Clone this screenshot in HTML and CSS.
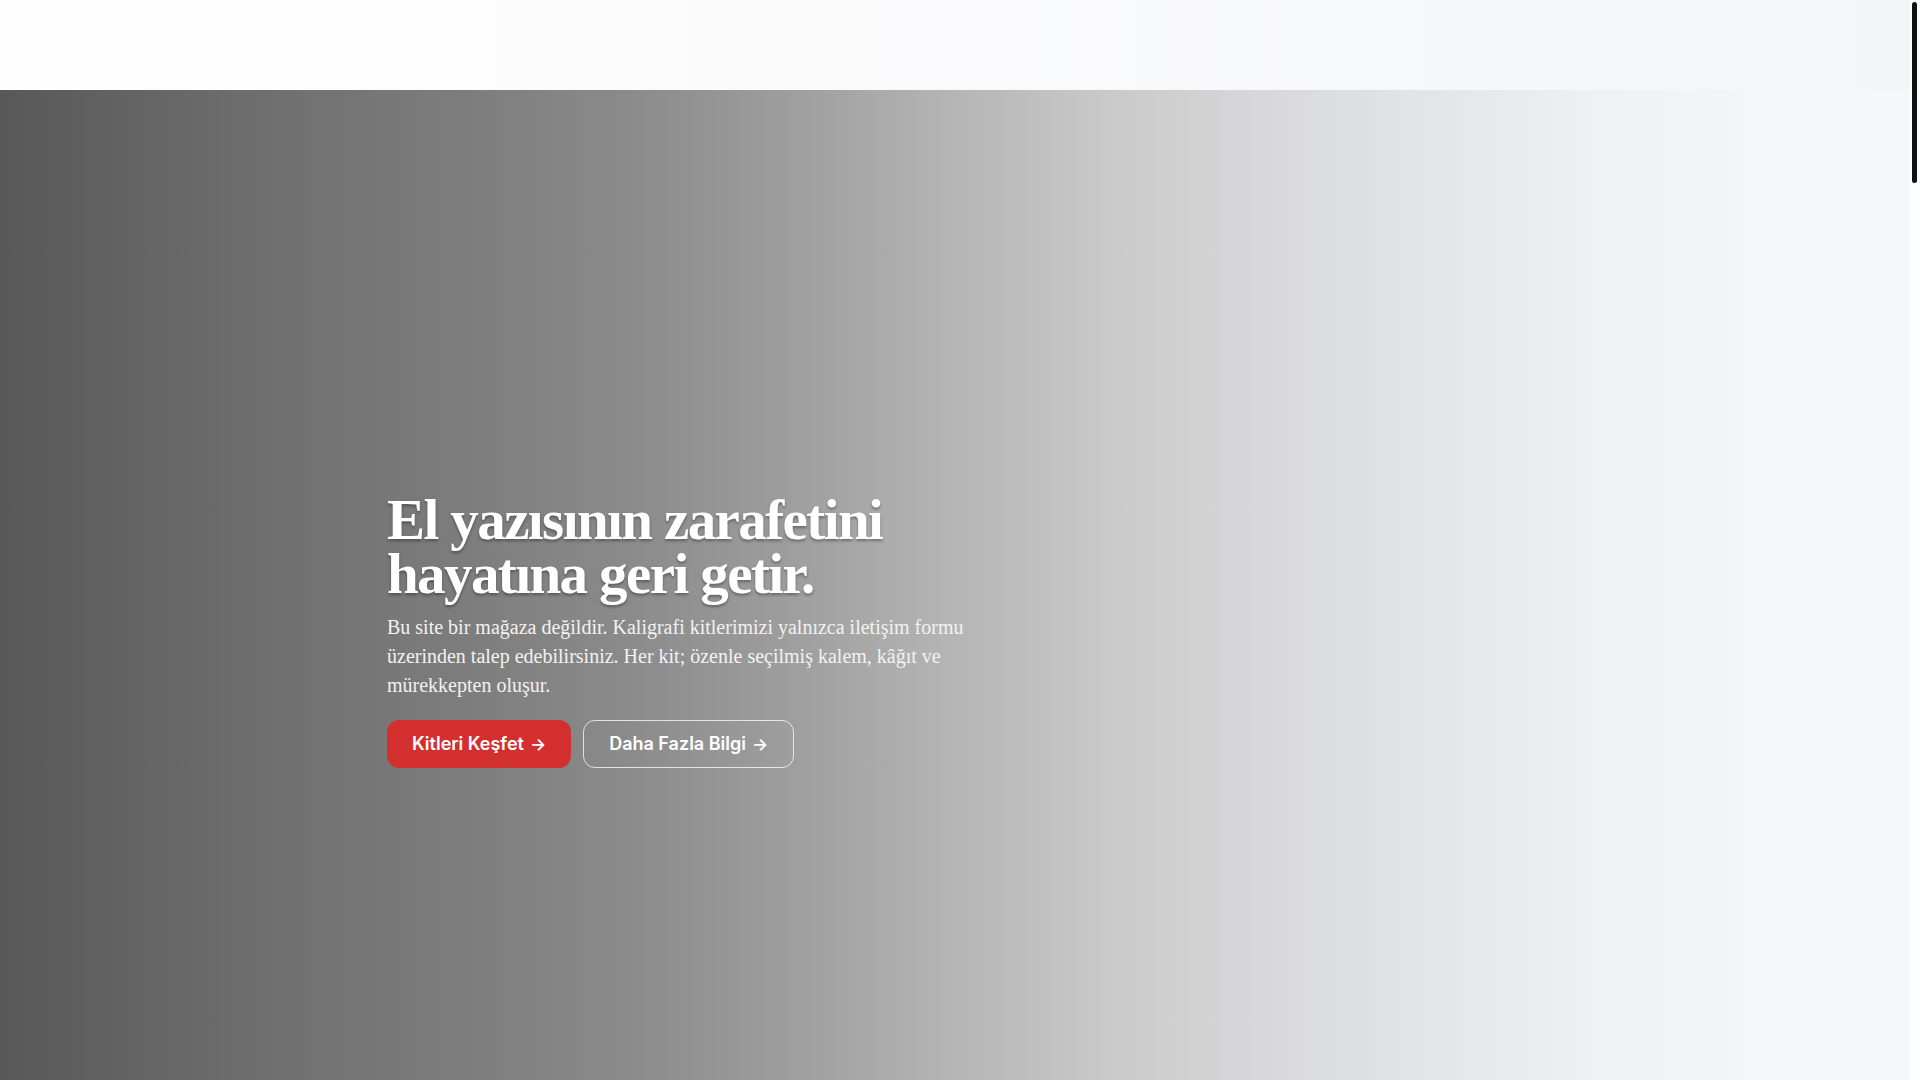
FILE: index.html
```html
<!DOCTYPE html>
<html lang="tr">
<head>
<meta charset="utf-8">
<title>Kaligrafi Kitleri</title>
<link rel="stylesheet" href="styles.css">
</head>
<body>
<header class="site-header"></header>
<main>
  <section class="hero">
    <div class="container">
      <h1 class="hero-title"><span class="line">El yazısının zarafetini</span><span class="line">hayatına geri getir.</span></h1>
      <p class="hero-text">Bu site bir mağaza değildir. Kaligrafi kitlerimizi yalnızca iletişim formu üzerinden talep edebilirsiniz. Her kit; özenle seçilmiş kalem, kâğıt ve mürekkepten oluşur.</p>
      <div class="hero-actions">
        <a class="btn btn-primary" href="#kitler">Kitleri Keşfet <span class="arrow">→</span></a>
        <a class="btn btn-outline" href="#bilgi">Daha Fazla Bilgi <span class="arrow">→</span></a>
      </div>
    </div>
  </section>
  <section class="below" id="kitler"></section>
</main>
<div class="scrollbar" aria-hidden="true"><div class="scrollbar-thumb"></div></div>
</body>
</html>
```
FILE: styles.css
```css
html {
  background: #f6f7f9;
  scrollbar-width: none;
}
html::-webkit-scrollbar {
  display: none;
}
body {
  margin: 0;
  font-family: "Liberation Serif", serif;
  color: #222;
}
.site-header {
  height: 90px;
  background: linear-gradient(to right, #fefefe 0%, #fbfbfc 40%, #f4f5f8 100%);
}
.hero {
  height: 1080px;
  display: flex;
  align-items: center;
  background: linear-gradient(to right,
    #585858 0%,
    #6c6c6c 12%,
    #7e7e7e 25%,
    #8b8b8b 33%,
    #a0a0a0 42%,
    #b6b6b6 50%,
    #cacaca 58%,
    #d8d8da 66%,
    #e3e4e7 74%,
    #eef0f2 83%,
    #f5f6f8 92%,
    #f6f7f9 100%);
}
.container {
  width: 1146px;
  margin: 0 auto;
}
.hero-title {
  margin: 0;
  font-family: "Liberation Serif", serif;
  font-weight: 700;
  font-size: 57px;
  line-height: 54px;
  letter-spacing: -0.028em;
  color: #fff;
  text-shadow: 0 2px 3px rgba(0, 0, 0, 0.35);
}
.line {
  display: block;
}
.hero-text {
  margin: 12px 0 0;
  max-width: 600px;
  font-size: 20px;
  line-height: 29px;
  color: #f2f2f2;
}
.hero-actions {
  display: flex;
  gap: 12px;
  margin-top: 20px;
}
.btn {
  display: inline-flex;
  align-items: center;
  justify-content: center;
  gap: 6px;
  height: 48px;
  box-sizing: border-box;
  padding: 0 25px;
  border-radius: 12px;
  font-family: Inter, "Liberation Sans", sans-serif;
  font-weight: 600;
  font-size: 18px;
  color: #fff;
  text-decoration: none;
}
.btn-primary {
  background: #d32f2f;
}
.btn-outline {
  border: 1px solid rgba(255, 255, 255, 0.75);
}
.arrow {
  font-size: 17px;
}
.below {
  height: 5230px;
}
.scrollbar {
  position: fixed;
  top: 0;
  right: 0;
  width: 10px;
  height: 100vh;
  background: #fdfdfd;
}
.scrollbar-thumb {
  margin: 2px 3px 0 2px;
  height: 181px;
  border-radius: 3px;
  background: #111;
}
```
